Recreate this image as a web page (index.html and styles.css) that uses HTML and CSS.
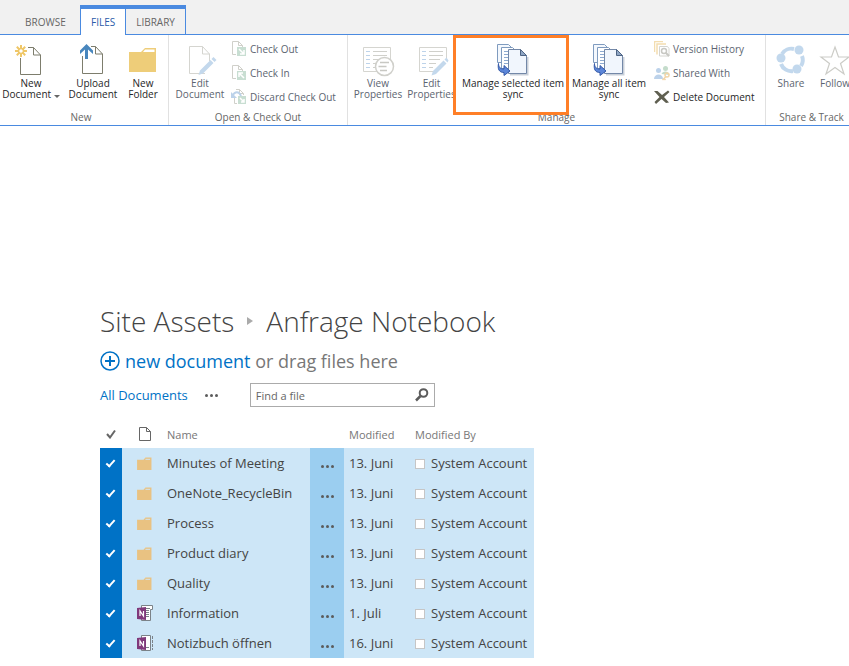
FILE: index.html
```
<!DOCTYPE html>
<html lang="en">
<head>
  <meta charset="UTF-8">
  <meta name="viewport" content="width=device-width, initial-scale=1.0">
  <title>Site Assets - Anfrage Notebook</title>
  <link rel="stylesheet" href="styles.css">
</head>
<body>
  <!-- shared icons -->
  <svg class="sprite" aria-hidden="true">
    <symbol id="folder" viewBox="0 0 16 14">
      <path d="M0 3h7l2-2.500h6.500V14H0z" fill="#e9c282"/>
      <path d="M9 2.500h5" stroke="#cde6f7"/>
    </symbol>
    <symbol id="sync" viewBox="0 0 32 32">
      <path d="M.5.5h11l3 3v15H.5z" fill="#f4f8fd" stroke="#7f9bbf"/>
      <path d="M4.500 3.500h11l3 3v18h-14z" fill="#fff" stroke="#7f9bbf"/>
      <path d="M7 7.500h5M7 10.500h5M7 13.500h5M7 16.500h5M7 19.500h5" stroke="#8eaad0"/>
      <path d="M13 30.500h17.500V13" fill="none" stroke="#c9d0d9" stroke-width="2"/>
      <path d="M11.500 5.500h12l6 6v18h-18z" fill="#f1f6fd" stroke="#7388a8"/>
      <path d="M23.500 5.500v6h6z" fill="#8fa6c4" stroke="#4f6585"/>
      <path d="M1.500 19.500c0 4 2 5.500 5.500 5.500v-3.500l6 5.500-6 4.500v-3C2 28.500.5 25 1.500 19.500z" fill="#5c86d8" stroke="#3459a8"/>
    </symbol>
  </svg>

  <header class="ribbon">
    <nav class="tabs">
      <a class="tab" href="#">BROWSE</a>
      <div class="tab-set">
        <a class="tab active" href="#">FILES</a>
        <a class="tab" href="#">LIBRARY</a>
      </div>
    </nav>

    <div class="groups">
      <section class="group group-new">
        <div class="tools">
          <button class="big" type="button">
            <svg viewBox="0 0 32 32"><path d="M5.500 14v16.500h20V11l-7-7.500H13M18.500 3.500V11h7" fill="none" stroke="#7d7d6d"/><path d="M6 1v4M6 9v4M0 7h4M8 7h4M1.800 2.800l2.700 2.700M7.500 8.500l2.700 2.700M10.200 2.800L7.500 5.500M4.500 8.500l-2.700 2.700" stroke="#efc768" stroke-width="2"/><circle cx="6" cy="7" r="2.500" fill="none" stroke="#efc768" stroke-width="1.500"/></svg>
            <span>New<br>Document <i class="caret"></i></span>
          </button>
          <button class="big upload" type="button">
            <svg viewBox="0 0 32 32"><path d="M5.500 12v17.500h20V10l-7-7.500H14M18.500 2.500V10h7" fill="none" stroke="#7d7d6d"/><path d="M9.500 0L16 6.500v3.500l-5-4.500V15H8V5.500L3 10V6.500z" fill="#4886bd"/></svg>
            <span>Upload<br>Document</span>
          </button>
          <button class="big folder" type="button">
            <svg viewBox="0 0 32 32"><path d="M2 8h12l4-4h11v24H2z" fill="#eecd79"/><path d="M18 5.500h9.500V8H16z" fill="#fff"/></svg>
            <span>New<br>Folder</span>
          </button>
        </div>
        <h2>New</h2>
      </section>

      <section class="group group-open">
        <div class="tools">
          <button class="big" type="button" disabled>
            <svg viewBox="0 0 32 32"><path d="M21 29.500H5.500v-27h13l7 7.500v7M18.500 2.500V10h7" fill="none" stroke="#d5d5d0"/><path d="M14.500 31l1.500-4.500L26.500 16l3 3L19 29.500z" fill="#c3d8ec"/><path d="M27.500 15l2-2 3 3-2 2z" fill="#c3d8ec"/></svg>
            <span>Edit<br>Document</span>
          </button>
          <div class="stack">
            <button class="small" type="button" disabled>
              <svg viewBox="0 0 16 16"><path d="M5 13.500H1.500V.5h6l4 4V6M7.500.5v4h4" fill="none" stroke="#d0d0ca"/><path d="M6 6h9v9H6z" fill="#c8ded2"/><path d="M8 8l5 5M13 9v4H9" fill="none" stroke="#fff" stroke-width="1.500"/></svg>
              Check Out
            </button>
            <button class="small" type="button" disabled>
              <svg viewBox="0 0 16 16"><path d="M5 13.500H1.500V.5h6l4 4V6M7.500.5v4h4" fill="none" stroke="#d0d0ca"/><path d="M6 6h9v9H6z" fill="#c8ded2"/><path d="M13 13L8 8M8 12V8h4" fill="none" stroke="#fff" stroke-width="1.500"/></svg>
              Check In
            </button>
            <button class="small" type="button" disabled>
              <svg viewBox="0 0 16 16"><path d="M3.500 9v5.500H6M5 .5h3.500l4 4V6M8.500.5v4h4" fill="none" stroke="#d0d0ca"/><path d="M7 7h8v8H7z" fill="#c8ded2"/><path d="M9 9l4 4M13 10v3h-3" fill="none" stroke="#fff" stroke-width="1.500"/><path d="M1.500 6.500C4 2 8 2 10 7" fill="none" stroke="#bcd2ea" stroke-width="2"/><path d="M0 3v6h6z" fill="#bcd2ea"/></svg>
              Discard Check Out
            </button>
          </div>
        </div>
        <h2>Open &amp; Check Out</h2>
      </section>

      <section class="group group-manage">
        <div class="tools">
          <button class="big view" type="button" disabled>
            <svg viewBox="0 0 32 32"><path d="M1.500 3.500h27v24h-27z" fill="none" stroke="#d5d5d0"/><path d="M11 7.500h14M11 11.500h14M11 15.500h6M11 19.500h3M11 23.500h3" stroke="#d0d0cb"/><path d="M4 7.500h4M4 11.500h4M4 15.500h4M4 19.500h4M4 23.500h4" stroke="#bdd3ea"/><circle cx="22.500" cy="22.500" r="9" fill="#fff" stroke="#d0d0cb" stroke-width="1.500"/><path d="M18 18.500h9M16.500 22.500h8M18 26.500h7" stroke="#c8c8c3" stroke-width="1.500"/></svg>
            <span>View<br>Properties</span>
          </button>
          <button class="big edit" type="button" disabled>
            <svg viewBox="0 0 32 32"><path d="M17 27.500H3.500v-24h27V14" fill="none" stroke="#d5d5d0"/><path d="M13 7.500h14M13 11.500h14M13 15.500h11M13 19.500h7M13 23.500h4" stroke="#d0d0cb"/><path d="M6 7.500h4M6 11.500h4M6 15.500h4M6 19.500h4M6 23.500h4" stroke="#bdd3ea"/><path d="M15.500 31.500l1.500-4.500L27.500 16.500l3 3L20 30z" fill="#c3d8ec"/><path d="M28.500 15.500l2-2 2 3-1 2z" fill="#c3d8ec"/></svg>
            <span>Edit<br>Properties</span>
          </button>
          <button class="big sync-selected" type="button">
            <svg><use href="#sync"/></svg>
            <span>Manage selected item<br>sync</span>
          </button>
          <button class="big sync-all" type="button">
            <svg><use href="#sync"/></svg>
            <span>Manage all item<br>sync</span>
          </button>
          <div class="stack wide">
            <button class="small" type="button" disabled>
              <svg viewBox="0 0 16 16"><path d="M.5 11V.5H9M3 13.500V3h9" fill="none" stroke="#f3ddb0" stroke-width="1.500"/><path d="M5.500 15V5.500h8l1.500 2V15z" fill="none" stroke="#d5d5d0"/><circle cx="10" cy="10" r="2.500" fill="#fff" stroke="#c8c8c3" stroke-width="1.500"/><path d="M12 12l3 3" stroke="#c8c8c3" stroke-width="2"/></svg>
              Version History
            </button>
            <button class="small" type="button" disabled>
              <svg viewBox="0 0 16 16"><circle cx="4.500" cy="5.500" r="2.500" fill="#bcd2ea"/><path d="M0 14c0-6 9-6 9 0z" fill="#bcd2ea"/><circle cx="11.500" cy="3.500" r="2.500" fill="#c4dccb"/><path d="M7.500 9c1-3.500 7-3.500 8 1z" fill="#c4dccb"/><circle cx="13" cy="10" r="2" fill="none" stroke="#f2d5a8" stroke-width="1.500"/><path d="M12 11.500L8.500 15M10 13.500l1.500 1.500" stroke="#f2d5a8" stroke-width="1.500"/></svg>
              Shared With
            </button>
            <button class="small" type="button">
              <svg viewBox="0 0 16 16"><path d="M0 2h3.500l4.500 4 6-4.500L15.500 3l-5.500 5 5 5.500-3 .5-4.500-4-5.500 5L.5 13l5-5z" fill="#5f5f50"/></svg>
              Delete Document
            </button>
          </div>
        </div>
        <h2>Manage</h2>
      </section>

      <section class="group group-share">
        <div class="tools">
          <button class="big share" type="button" disabled>
            <svg viewBox="0 0 32 32"><path d="M7 10a11 11 0 0 1 12-5M27 12a11 11 0 0 1-1 10M18 27A11 11 0 0 1 6 20" fill="none" stroke="#c2d8ed" stroke-width="4"/><circle cx="24" cy="6" r="4.500" fill="#c2d8ed"/><circle cx="6" cy="14" r="4.500" fill="#c2d8ed"/><circle cx="22" cy="25" r="4.500" fill="#c2d8ed"/></svg>
            <span>Share</span>
          </button>
          <button class="big follow" type="button" disabled>
            <svg viewBox="0 0 32 32"><path d="M16 3l3.500 10H30l-8.500 6.500L25 30l-9-6.500L7 30l3.500-10.500L2 13h10.500z" fill="none" stroke="#ccccc7" stroke-width="1.200"/></svg>
            <span>Follow</span>
          </button>
        </div>
        <h2>Share &amp; Track</h2>
      </section>
    </div>
  </header>

  <main class="content">
    <h1>Site Assets <i class="crumb"></i> Anfrage Notebook</h1>

    <div class="new-item">
      <svg viewBox="0 0 20 20"><circle cx="10" cy="10" r="9" fill="none" stroke="#0072c6" stroke-width="1.500"/><path d="M10 5v10M5 10h10" stroke="#0072c6" stroke-width="2"/></svg>
      <p><a href="#">new document</a> or drag files here</p>
    </div>

    <div class="views">
      <a href="#">All Documents</a>
      <button class="dots" type="button" aria-label="More views"><i></i><i></i><i></i></button>
      <form class="search">
        <input type="text" placeholder="Find a file" aria-label="Find a file">
        <button type="button" aria-label="Search">
          <svg viewBox="0 0 14 14"><circle cx="8.500" cy="5" r="3.800" fill="none" stroke="#5c5c5c" stroke-width="2"/><path d="M5.500 8L1 12.500" stroke="#5c5c5c" stroke-width="2.500"/></svg>
        </button>
      </form>
    </div>

    <table class="files">
      <thead>
        <tr>
          <th class="col-check"><svg class="tick" viewBox="0 0 10 10"><path d="M1 5l3 3.500L9 1.500" fill="none" stroke="#666" stroke-width="2"/></svg></th>
          <th class="col-type"><svg class="page" viewBox="0 0 12 14"><path d="M.5.5h7l4 4v9H.5zM7.500.5v4h4" fill="none" stroke="#666"/></svg></th>
          <th class="col-name">Name</th>
          <th class="col-menu"></th>
          <th class="col-date">Modified</th>
          <th class="col-user">Modified By</th>
        </tr>
      </thead>
      <tbody id="rows"></tbody>
    </table>
  </main>

  <script>
    const files = [
      ['Minutes of Meeting', '13. Juni', 'folder'],
      ['OneNote_RecycleBin', '13. Juni', 'folder'],
      ['Process', '13. Juni', 'folder'],
      ['Product diary', '13. Juni', 'folder'],
      ['Quality', '13. Juni', 'folder'],
      ['Information', '1. Juli', 'section'],
      ['Notizbuch öffnen', '16. Juni', 'notebook']
    ];

    const badge = '<path d="M0 3l9-1v13l-9-1z" fill="#80397b"/><path d="M3 11V6l3.500 5V6" fill="none" stroke="#fff" stroke-width="1.200"/>';
    const icons = {
      folder: '<svg class="icon-folder"><use href="#folder"/></svg>',
      section: '<svg class="icon-note" viewBox="0 0 16 16"><path d="M4.500.5h11v4h-2v11h-9z" fill="#fff" stroke="#7b8288"/><path d="M9 3.500h4M9 5.500h3M9 7.500h3M9 9.500h3M9 11.500h3" stroke="#7b8288"/>' + badge + '</svg>',
      notebook: '<svg class="icon-note" viewBox="0 0 16 16"><path d="M4.500.5h9v15h-9z" fill="#fff" stroke="#7b8288"/><path d="M9 12.500h3" stroke="#7b8288"/><path d="M15.500 1v14" stroke="#7b8288" stroke-dasharray="3 1"/>' + badge + '</svg>'
    };

    document.getElementById('rows').innerHTML = files.map(([name, date, type]) => `
      <tr>
        <td class="col-check"><input type="checkbox" aria-label="${name}" checked></td>
        <td class="col-type">${icons[type]}</td>
        <td class="col-name">${name}</td>
        <td class="col-menu"><button class="dots" type="button" aria-label="Open menu"><i></i><i></i><i></i></button></td>
        <td class="col-date">${date}</td>
        <td class="col-user"><span class="presence"></span>System Account</td>
      </tr>`).join('');
  </script>
</body>
</html>
```
FILE: styles.css
```
*,
*::before,
*::after {
  box-sizing: border-box;
}

body {
  margin: 0;
  background: #fff;
  color: #444;
  font-family: "Open Sans", "Noto Sans", sans-serif;
  font-size: 13px;
}

button {
  padding: 0;
  border: 0;
  background: none;
  color: inherit;
  font: inherit;
}

a {
  color: #0072c6;
  text-decoration: none;
}

.sprite {
  position: absolute;
  width: 0;
  height: 0;
}

/* ribbon */
.ribbon {
  overflow: hidden;
  border-bottom: 1px solid #4a8ae0;
  font-size: 10px;
}

.tabs {
  display: flex;
  align-items: flex-end;
  height: 35px;
  padding-left: 12px;
  background: #f1f1f1;
  box-shadow: inset 0 -1px #4a8ae0;
}

.tabs > .tab {
  width: 68px;
  padding-left: 13px;
}

.tab {
  display: block;
  padding: 0 10px;
  color: #666;
  line-height: 26px;
}

.tab-set {
  display: flex;
  border: 1px solid #4a8ae0;
  border-top-width: 4px;
  border-bottom: 0;
}

.tab-set .active {
  border-right: 1px solid #4a8ae0;
  background: #fff;
  color: #2a5caa;
}

.groups {
  display: flex;
  height: 90px;
}

.group {
  display: flex;
  flex: none;
  flex-direction: column;
  justify-content: space-between;
  border-right: 1px solid #e1e1e1;
}

.group h2 {
  margin: 0;
  color: #666;
  font-size: 10px;
  font-weight: 400;
  line-height: 16px;
  text-align: center;
}

.group-new {
  width: 169px;
  padding-right: 6px;
}

.group-open {
  width: 179px;
}

.group-manage {
  width: 418px;
}

.group-share {
  width: 92px;
}

.tools {
  display: flex;
  align-items: flex-start;
}

.big {
  position: relative;
  display: flex;
  flex: none;
  flex-direction: column;
  align-items: center;
  width: 62px;
  padding-top: 9px;
  color: #262626;
  line-height: 11px;
  text-align: center;
  white-space: nowrap;
}

.big svg {
  width: 32px;
  height: 32px;
  margin-bottom: 2px;
  overflow: visible;
}

.big:disabled,
.small:disabled {
  color: #5c6470;
}

.folder {
  width: 38px;
}

.view {
  width: 60px;
}

.edit {
  width: 47px;
}

.sync-selected {
  width: 116px;
}

.sync-all {
  width: 76px;
}

.share {
  width: 50px;
}

.follow {
  width: 38px;
}

/* highlight frame around the selected command */
.sync-selected::after {
  content: "";
  position: absolute;
  top: 0;
  left: -2px;
  z-index: 1;
  width: 116px;
  height: 80px;
  border: 3px solid #ff7f27;
}

.caret {
  display: inline-block;
  border: 3px solid transparent;
  border-top-color: #666;
  border-bottom: 0;
}

.stack {
  display: flex;
  flex-direction: column;
  padding-top: 2px;
}

.stack.wide {
  padding-left: 7px;
}

.small {
  display: flex;
  align-items: center;
  gap: 3px;
  height: 24px;
  color: #262626;
  white-space: nowrap;
}

.small svg {
  width: 16px;
  height: 16px;
}

/* library */
.content {
  padding: 173px 0 8px 100px;
}

h1 {
  display: flex;
  align-items: center;
  gap: 13px;
  margin: 0;
  font-size: 28px;
  font-weight: 300;
  line-height: 44px;
}

.crumb {
  border: 4px solid transparent;
  border-left: 6px solid #aaa;
  border-right: 0;
}

.new-item {
  display: flex;
  align-items: center;
  gap: 5px;
  color: #777;
  font-size: 18px;
  line-height: 36px;
}

.new-item svg {
  width: 20px;
  height: 20px;
}

.new-item p {
  margin: 0;
}

.views {
  display: flex;
  align-items: center;
  height: 32px;
  gap: 17px;
}

.dots {
  display: inline-flex;
  gap: 2px;
}

.dots i {
  width: 3px;
  height: 3px;
  border-radius: 50%;
  background: #5c5c5c;
}

.search {
  display: flex;
  align-items: center;
  width: 185px;
  height: 24px;
  margin-left: 15px;
  padding: 0 5px;
  border: 1px solid #ababab;
}

.search input {
  flex: 1;
  min-width: 0;
  padding: 0;
  border: 0;
  outline: 0;
  font: inherit;
  font-size: 11px;
}

.search input::placeholder {
  color: #666;
}

.search svg {
  display: block;
  width: 14px;
  height: 14px;
}

.files {
  width: 434px;
  margin-top: 9px;
  border-collapse: collapse;
  table-layout: fixed;
}

.files th {
  height: 28px;
  padding: 0;
  color: #777;
  font-size: 11px;
  font-weight: 400;
  text-align: left;
}

.files td {
  height: 30px;
  padding: 0;
  background: #cde6f7;
  white-space: nowrap;
}

.files .col-check {
  width: 22px;
  text-align: center;
}

.files .col-type {
  width: 45px;
  text-align: center;
}

.files .col-name {
  width: 143px;
}

.files .col-menu {
  width: 34px;
  text-align: center;
}

.files .col-date {
  width: 71px;
  padding-left: 5px;
}

.files td.col-check {
  background: #0072c6;
}

.files td.col-menu {
  background: #9bcef0;
}

.files svg {
  display: block;
  margin: 0 auto;
}

.files .tick {
  width: 10px;
  height: 10px;
}

.files .page {
  width: 12px;
  height: 14px;
}

.icon-folder {
  width: 15px;
  height: 13px;
}

.icon-note {
  width: 16px;
  height: 16px;
}

.col-check input {
  display: block;
  width: 10px;
  height: 10px;
  margin: 0 auto;
  appearance: none;
}

.col-check input:checked::before {
  content: "";
  display: block;
  width: 9px;
  height: 5px;
  margin-top: 2px;
  border: solid #fff;
  border-width: 0 0 2px 2px;
  transform: rotate(-48deg);
}

.presence {
  display: inline-block;
  width: 10px;
  height: 10px;
  margin-right: 6px;
  border: 1px solid #c6c6c6;
  background: #fff;
  vertical-align: -1px;
}
```
